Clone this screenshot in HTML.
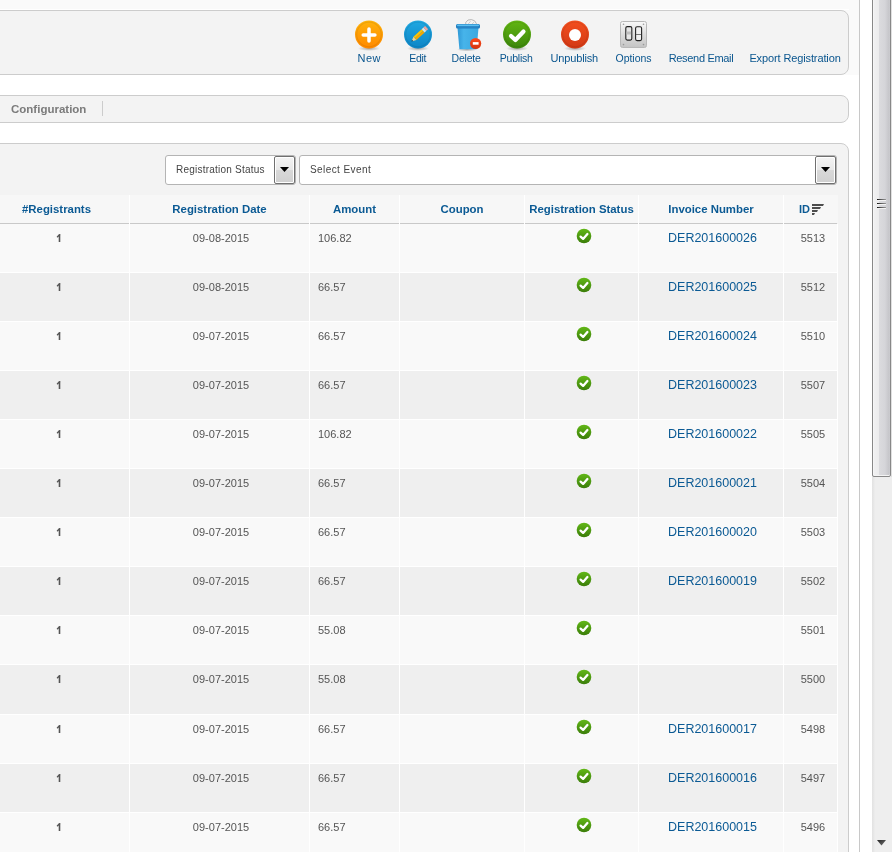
<!DOCTYPE html>
<html><head><meta charset="utf-8">
<style>
*{box-sizing:border-box;margin:0;padding:0}
html,body{width:892px;height:852px;overflow:hidden;background:#fff;font-family:"Liberation Sans",sans-serif}
.gs{position:absolute;left:0;top:0;width:892px;height:852px;will-change:transform}
.a{position:absolute}
.topband{left:0;top:0;width:859px;height:75px;background:#fafafa}
.vline{left:859px;top:0;width:1px;height:852px;background:#c8c8c8}
.box{background:#f3f3f3;border:1px solid #cccccc;border-radius:8px}
.tb{color:#09558e;font-size:11px;line-height:12px;white-space:nowrap}
.hd{color:#0b5a94;font-size:11.4px;font-weight:bold;line-height:13px;white-space:nowrap;text-align:center}
.row{left:-20px;width:857px;height:48px}
.cell{position:absolute;top:0;height:48px}
.tx{position:absolute;white-space:nowrap;font-size:11px;line-height:12px;color:#555}
.inv{position:absolute;white-space:nowrap;font-size:12.5px;line-height:14px;color:#0b5a94}
</style></head><body><div class="gs">
<div class="a topband"></div>
<div class="a vline"></div>

<!-- toolbar -->
<div class="a box" style="left:-20px;top:10px;width:869px;height:65px"></div>
<div class="a" style="left:-20px;top:9px;width:869px;height:1px;background:#fff"></div>

<svg class="a" style="left:353px;top:18px" width="32" height="34" viewBox="0 0 32 34">
<defs><linearGradient id="gn" x1="0" y1="0" x2="0" y2="1"><stop offset="0" stop-color="#ffb30a"/><stop offset="1" stop-color="#ff8800"/></linearGradient>
<radialGradient id="sh" cx="0.5" cy="0.5" r="0.5"><stop offset="0" stop-color="#000" stop-opacity="0.32"/><stop offset="1" stop-color="#000" stop-opacity="0"/></radialGradient></defs>
<ellipse cx="16" cy="30.5" rx="11" ry="2.5" fill="url(#sh)"/>
<circle cx="16" cy="16.5" r="14" fill="url(#gn)"/><circle cx="16" cy="16.5" r="12.3" fill="none" stroke="#000" stroke-opacity="0.07" stroke-width="1.2"/>
<path d="M16 11v12 M10.2 17h11.7" stroke="#fff" stroke-width="3.5" stroke-linecap="round"/></svg>
<svg class="a" style="left:402px;top:18px" width="32" height="34" viewBox="0 0 32 34">
<defs><linearGradient id="ge" x1="0" y1="0" x2="0" y2="1"><stop offset="0" stop-color="#1fa8e2"/><stop offset="1" stop-color="#0d85c6"/></linearGradient></defs>
<ellipse cx="16" cy="30.5" rx="11" ry="2.5" fill="url(#sh)"/>
<circle cx="16" cy="16.5" r="14" fill="url(#ge)"/><circle cx="16" cy="16.5" r="12.3" fill="none" stroke="#000" stroke-opacity="0.07" stroke-width="1.2"/>
<path d="M11.05 23.03 L14.42 21.97 L11.44 18.73 L10.10 22.00Z" fill="#e9d39a"/>
<path d="M9.40 23.60 L11.05 23.03 L10.10 22.00Z" fill="#3a3a3a"/>
<path d="M12.93 20.35 L21.17 12.76 L19.68 11.14 L11.44 18.73Z" fill="#ffc400"/>
<path d="M14.42 21.97 L22.66 14.38 L21.17 12.76 L12.93 20.35Z" fill="#f5a800"/>
<path d="M22.66 14.38 L24.35 12.82 L21.37 9.58 L19.68 11.14Z" fill="#d4e6ea"/>
<path d="M24.35 12.82 L26.09 11.22 L23.11 7.98 L21.37 9.58Z" fill="#f2a29a"/>
</svg>
<svg class="a" style="left:451px;top:16px" width="34" height="36" viewBox="0 0 34 36">
<defs><linearGradient id="gt" x1="0" y1="0" x2="1" y2="0"><stop offset="0" stop-color="#2f98d6"/><stop offset="0.3" stop-color="#47b4ea"/><stop offset="1" stop-color="#3aa8e0"/></linearGradient>
<linearGradient id="gr" x1="0" y1="0" x2="0" y2="1"><stop offset="0" stop-color="#ff4a1a"/><stop offset="1" stop-color="#d2340e"/></linearGradient></defs>
<ellipse cx="16" cy="33.5" rx="10" ry="2" fill="url(#sh)"/>
<path d="M14.6 9.8 L14.8 6.4 L17 4 L20.5 3.6 L23.6 4.8 L25.4 7.6 L25.4 9.8 Z" fill="#f2f2f2" stroke="#9c9c9c" stroke-width="0.7"/><path d="M16.8 8.6 L19.6 5.2 M19.8 9.2 L23 6.2" stroke="#b5b5b5" stroke-width="0.6" fill="none"/>
<path d="M6.4 11 L8.4 33.2 L25.6 33.2 L27.6 11 Z" fill="url(#gt)"/>
<rect x="5" y="8" width="24" height="4.5" rx="1.5" fill="#1f7fc2"/>
<rect x="6" y="8.6" width="22" height="1.6" rx="0.8" fill="#5cbff0"/>
<rect x="7" y="10.6" width="20" height="1.2" fill="#2a86c6"/>
<circle cx="24.6" cy="27.5" r="5.6" fill="url(#gr)"/>
<rect x="21.8" y="26.1" width="5.8" height="2.6" fill="#fff"/>
</svg>
<svg class="a" style="left:501px;top:18px" width="32" height="34" viewBox="0 0 32 34">
<defs><linearGradient id="gp" x1="0" y1="0" x2="0" y2="1"><stop offset="0" stop-color="#62b612"/><stop offset="1" stop-color="#3c860c"/></linearGradient></defs>
<ellipse cx="16" cy="30.5" rx="11" ry="2.5" fill="url(#sh)"/>
<circle cx="16" cy="16.5" r="14" fill="url(#gp)"/><circle cx="16" cy="16.5" r="12.3" fill="none" stroke="#000" stroke-opacity="0.07" stroke-width="1.2"/>
<path d="M10 18 L14.4 22 L22.5 13.5" fill="none" stroke="#fff" stroke-width="4.2" stroke-linecap="round" stroke-linejoin="round"/></svg>
<svg class="a" style="left:559px;top:18px" width="32" height="34" viewBox="0 0 32 34">
<defs><linearGradient id="gu" x1="0" y1="0" x2="0" y2="1"><stop offset="0" stop-color="#f44f1e"/><stop offset="1" stop-color="#d23814"/></linearGradient></defs>
<ellipse cx="16" cy="30.5" rx="11" ry="2.5" fill="url(#sh)"/>
<circle cx="16" cy="16.5" r="14" fill="url(#gu)"/><circle cx="16" cy="16.5" r="12.3" fill="none" stroke="#000" stroke-opacity="0.07" stroke-width="1.2"/>
<circle cx="16" cy="17" r="6" fill="#fff"/></svg>
<svg class="a" style="left:618px;top:19px" width="31" height="31" viewBox="0 0 31 31">
<defs><linearGradient id="go" x1="0" y1="0" x2="0" y2="1"><stop offset="0" stop-color="#fafafa"/><stop offset="0.5" stop-color="#dcdcdc"/><stop offset="1" stop-color="#c4c4c4"/></linearGradient></defs>
<rect x="2.5" y="2.5" width="26" height="26" rx="2" fill="url(#go)" stroke="#b8b8b8" stroke-width="1"/>
<rect x="7.8" y="7.6" width="6" height="13.5" rx="1.5" fill="#e6e6e6" stroke="#222" stroke-width="1.1"/>
<rect x="8.5" y="12.5" width="4.6" height="3" fill="#bdbdbd"/>
<rect x="17.6" y="7.8" width="6" height="13.8" rx="1.5" fill="#f0f0f0" stroke="#222" stroke-width="1.1"/>
<path d="M18 15.5h5.2" stroke="#555" stroke-width="0.8"/>
<circle cx="5.5" cy="5.3" r="0.8" fill="#999"/><circle cx="25.5" cy="5.3" r="0.8" fill="#999"/>
<circle cx="5.5" cy="25.6" r="0.8" fill="#999"/><circle cx="25.5" cy="25.6" r="0.8" fill="#999"/>
</svg>
<div class="a tb" style="left:357.5px;top:52px;letter-spacing:0.5px;font-size:11px">New</div>
<div class="a tb" style="left:409.3px;top:52px;letter-spacing:-0.3px;font-size:10.5px">Edit</div>
<div class="a tb" style="left:451.5px;top:52px;letter-spacing:-0.2px;font-size:10.5px">Delete</div>
<div class="a tb" style="left:499.7px;top:52px;letter-spacing:-0.2px;font-size:10.5px">Publish</div>
<div class="a tb" style="left:550.5px;top:52px;letter-spacing:-0.15px;font-size:11px">Unpublish</div>
<div class="a tb" style="left:615.6px;top:52px;letter-spacing:-0.05px;font-size:10.5px">Options</div>
<div class="a tb" style="left:668.7px;top:52px;letter-spacing:-0.32px;font-size:11px">Resend Email</div>
<div class="a tb" style="left:749.4px;top:52px;letter-spacing:-0.12px;font-size:11px">Export Registration</div>

<!-- submenu bar -->
<div class="a box" style="left:-20px;top:95px;width:869px;height:28px"></div>
<div class="a" style="left:11px;top:103px;font-size:11.5px;font-weight:bold;color:#7b7b7b;line-height:13px">Configuration</div>
<div class="a" style="left:102px;top:101px;width:1px;height:15px;background:#ccc"></div>

<!-- main panel -->
<div class="a box" style="left:-20px;top:143px;width:869px;height:740px"></div>

<div class="a" style="left:165px;top:155px;width:131px;height:30px;background:#fff;border:1px solid #b4b4b4;border-radius:3px"></div>
<div class="a" style="left:176px;top:164px;font-size:10px;letter-spacing:0.22px;line-height:12px;color:#444;white-space:nowrap">Registration Status</div>
<div class="a" style="left:274px;top:156px;width:21px;height:28px;border:1px solid #707070;border-radius:2px;background:linear-gradient(#f4f4f4,#e8e8e8 48%,#d8d8d8 52%,#d0d0d0);box-shadow:inset 0 0 0 1px #fff"></div>
<svg class="a" style="left:280px;top:167px" width="9" height="5" viewBox="0 0 9 5"><path d="M0 0h9L4.5 5z" fill="#000"/></svg>
<div class="a" style="left:299px;top:155px;width:538px;height:30px;background:#fff;border:1px solid #b4b4b4;border-radius:3px"></div>
<div class="a" style="left:310px;top:164px;font-size:10px;letter-spacing:0.42px;line-height:12px;color:#444;white-space:nowrap">Select Event</div>
<div class="a" style="left:815px;top:156px;width:21px;height:28px;border:1px solid #707070;border-radius:2px;background:linear-gradient(#f4f4f4,#e8e8e8 48%,#d8d8d8 52%,#d0d0d0);box-shadow:inset 0 0 0 1px #fff"></div>
<svg class="a" style="left:821px;top:167px" width="9" height="5" viewBox="0 0 9 5"><path d="M0 0h9L4.5 5z" fill="#000"/></svg>
<div class="a" style="left:-20px;top:195px;width:858px;height:28px;background:#f7f7f7"></div>
<div class="a" style="left:-20px;top:223px;width:857px;height:1px;background:#c9c9c9"></div>
<div class="a" style="left:129px;top:195px;width:1px;height:29px;background:#fff"></div>
<div class="a" style="left:309px;top:195px;width:1px;height:29px;background:#fff"></div>
<div class="a" style="left:399px;top:195px;width:1px;height:29px;background:#fff"></div>
<div class="a" style="left:524px;top:195px;width:1px;height:29px;background:#fff"></div>
<div class="a" style="left:638px;top:195px;width:1px;height:29px;background:#fff"></div>
<div class="a" style="left:783px;top:195px;width:1px;height:29px;background:#fff"></div>
<div class="a hd" style="left:-16px;width:145px;top:203px">#Registrants</div>
<div class="a hd" style="left:130px;width:179px;top:203px">Registration Date</div>
<div class="a hd" style="left:310px;width:89px;top:203px">Amount</div>
<div class="a hd" style="left:400px;width:124px;top:203px">Coupon</div>
<div class="a hd" style="left:525px;width:113px;top:203px">Registration Status</div>
<div class="a hd" style="left:639px;width:144px;top:203px">Invoice Number</div>
<div class="a hd" style="left:799px;top:203px;font-size:11px">ID</div>
<svg class="a" style="left:812px;top:204px" width="13" height="12" viewBox="0 0 13 12"><path d="M0 0h12l-1 2H0z M0 3h9l-1 2H0z M0 6h6l-1 2H0z M0 9h3l-1 2H0z" fill="#4d4d4d"/></svg>
<div class="a" style="left:-20px;top:224px;width:857px;height:48px;background:#f9f9f9"></div>
<div class="a" style="left:-20px;top:272px;width:857px;height:1px;background:#fff"></div>
<div class="a" style="left:129px;top:224px;width:1px;height:48px;background:#fff"></div>
<div class="a" style="left:309px;top:224px;width:1px;height:48px;background:#fff"></div>
<div class="a" style="left:399px;top:224px;width:1px;height:48px;background:#fff"></div>
<div class="a" style="left:524px;top:224px;width:1px;height:48px;background:#fff"></div>
<div class="a" style="left:638px;top:224px;width:1px;height:48px;background:#fff"></div>
<div class="a" style="left:783px;top:224px;width:1px;height:48px;background:#fff"></div>
<svg class="a" style="left:55px;top:233px" width="8" height="10" viewBox="0 0 8 10"><path d="M4.5 1.4V9" stroke="#555" stroke-width="1.6"/><path d="M4.6 1.7 L2.5 3.7" stroke="#555" stroke-width="1.5" stroke-linecap="round"/></svg>
<div class="tx" style="left:130px;width:182px;text-align:center;top:232px">09-08-2015</div>
<div class="tx" style="left:318px;top:232px">106.82</div>
<div class="a" style="left:576px;top:228px"><svg width="16" height="16" viewBox="0 0 16 16"><defs><linearGradient id="gc" x1="0" y1="0" x2="0" y2="1"><stop offset="0" stop-color="#62b817"/><stop offset="1" stop-color="#3b7d0a"/></linearGradient></defs><circle cx="8" cy="8" r="7.3" fill="url(#gc)"/><path d="M4.6 8.6 L7.1 10.9 L11.4 6" fill="none" stroke="#fff" stroke-width="2.3" stroke-linecap="round" stroke-linejoin="round"/></svg></div>
<div class="inv" style="left:640px;width:145px;text-align:center;top:231px">DER201600026</div>
<div class="tx" style="left:785px;width:56px;text-align:center;top:232px">5513</div>
<div class="a" style="left:-20px;top:273px;width:857px;height:48px;background:#efefef"></div>
<div class="a" style="left:-20px;top:321px;width:857px;height:1px;background:#fff"></div>
<div class="a" style="left:129px;top:273px;width:1px;height:48px;background:#fff"></div>
<div class="a" style="left:309px;top:273px;width:1px;height:48px;background:#fff"></div>
<div class="a" style="left:399px;top:273px;width:1px;height:48px;background:#fff"></div>
<div class="a" style="left:524px;top:273px;width:1px;height:48px;background:#fff"></div>
<div class="a" style="left:638px;top:273px;width:1px;height:48px;background:#fff"></div>
<div class="a" style="left:783px;top:273px;width:1px;height:48px;background:#fff"></div>
<svg class="a" style="left:55px;top:282px" width="8" height="10" viewBox="0 0 8 10"><path d="M4.5 1.4V9" stroke="#555" stroke-width="1.6"/><path d="M4.6 1.7 L2.5 3.7" stroke="#555" stroke-width="1.5" stroke-linecap="round"/></svg>
<div class="tx" style="left:130px;width:182px;text-align:center;top:281px">09-08-2015</div>
<div class="tx" style="left:318px;top:281px">66.57</div>
<div class="a" style="left:576px;top:277px"><svg width="16" height="16" viewBox="0 0 16 16"><defs><linearGradient id="gc" x1="0" y1="0" x2="0" y2="1"><stop offset="0" stop-color="#62b817"/><stop offset="1" stop-color="#3b7d0a"/></linearGradient></defs><circle cx="8" cy="8" r="7.3" fill="url(#gc)"/><path d="M4.6 8.6 L7.1 10.9 L11.4 6" fill="none" stroke="#fff" stroke-width="2.3" stroke-linecap="round" stroke-linejoin="round"/></svg></div>
<div class="inv" style="left:640px;width:145px;text-align:center;top:280px">DER201600025</div>
<div class="tx" style="left:785px;width:56px;text-align:center;top:281px">5512</div>
<div class="a" style="left:-20px;top:322px;width:857px;height:48px;background:#f9f9f9"></div>
<div class="a" style="left:-20px;top:370px;width:857px;height:1px;background:#fff"></div>
<div class="a" style="left:129px;top:322px;width:1px;height:48px;background:#fff"></div>
<div class="a" style="left:309px;top:322px;width:1px;height:48px;background:#fff"></div>
<div class="a" style="left:399px;top:322px;width:1px;height:48px;background:#fff"></div>
<div class="a" style="left:524px;top:322px;width:1px;height:48px;background:#fff"></div>
<div class="a" style="left:638px;top:322px;width:1px;height:48px;background:#fff"></div>
<div class="a" style="left:783px;top:322px;width:1px;height:48px;background:#fff"></div>
<svg class="a" style="left:55px;top:331px" width="8" height="10" viewBox="0 0 8 10"><path d="M4.5 1.4V9" stroke="#555" stroke-width="1.6"/><path d="M4.6 1.7 L2.5 3.7" stroke="#555" stroke-width="1.5" stroke-linecap="round"/></svg>
<div class="tx" style="left:130px;width:182px;text-align:center;top:330px">09-07-2015</div>
<div class="tx" style="left:318px;top:330px">66.57</div>
<div class="a" style="left:576px;top:326px"><svg width="16" height="16" viewBox="0 0 16 16"><defs><linearGradient id="gc" x1="0" y1="0" x2="0" y2="1"><stop offset="0" stop-color="#62b817"/><stop offset="1" stop-color="#3b7d0a"/></linearGradient></defs><circle cx="8" cy="8" r="7.3" fill="url(#gc)"/><path d="M4.6 8.6 L7.1 10.9 L11.4 6" fill="none" stroke="#fff" stroke-width="2.3" stroke-linecap="round" stroke-linejoin="round"/></svg></div>
<div class="inv" style="left:640px;width:145px;text-align:center;top:329px">DER201600024</div>
<div class="tx" style="left:785px;width:56px;text-align:center;top:330px">5510</div>
<div class="a" style="left:-20px;top:371px;width:857px;height:48px;background:#efefef"></div>
<div class="a" style="left:-20px;top:419px;width:857px;height:1px;background:#fff"></div>
<div class="a" style="left:129px;top:371px;width:1px;height:48px;background:#fff"></div>
<div class="a" style="left:309px;top:371px;width:1px;height:48px;background:#fff"></div>
<div class="a" style="left:399px;top:371px;width:1px;height:48px;background:#fff"></div>
<div class="a" style="left:524px;top:371px;width:1px;height:48px;background:#fff"></div>
<div class="a" style="left:638px;top:371px;width:1px;height:48px;background:#fff"></div>
<div class="a" style="left:783px;top:371px;width:1px;height:48px;background:#fff"></div>
<svg class="a" style="left:55px;top:380px" width="8" height="10" viewBox="0 0 8 10"><path d="M4.5 1.4V9" stroke="#555" stroke-width="1.6"/><path d="M4.6 1.7 L2.5 3.7" stroke="#555" stroke-width="1.5" stroke-linecap="round"/></svg>
<div class="tx" style="left:130px;width:182px;text-align:center;top:379px">09-07-2015</div>
<div class="tx" style="left:318px;top:379px">66.57</div>
<div class="a" style="left:576px;top:375px"><svg width="16" height="16" viewBox="0 0 16 16"><defs><linearGradient id="gc" x1="0" y1="0" x2="0" y2="1"><stop offset="0" stop-color="#62b817"/><stop offset="1" stop-color="#3b7d0a"/></linearGradient></defs><circle cx="8" cy="8" r="7.3" fill="url(#gc)"/><path d="M4.6 8.6 L7.1 10.9 L11.4 6" fill="none" stroke="#fff" stroke-width="2.3" stroke-linecap="round" stroke-linejoin="round"/></svg></div>
<div class="inv" style="left:640px;width:145px;text-align:center;top:378px">DER201600023</div>
<div class="tx" style="left:785px;width:56px;text-align:center;top:379px">5507</div>
<div class="a" style="left:-20px;top:420px;width:857px;height:48px;background:#f9f9f9"></div>
<div class="a" style="left:-20px;top:468px;width:857px;height:1px;background:#fff"></div>
<div class="a" style="left:129px;top:420px;width:1px;height:48px;background:#fff"></div>
<div class="a" style="left:309px;top:420px;width:1px;height:48px;background:#fff"></div>
<div class="a" style="left:399px;top:420px;width:1px;height:48px;background:#fff"></div>
<div class="a" style="left:524px;top:420px;width:1px;height:48px;background:#fff"></div>
<div class="a" style="left:638px;top:420px;width:1px;height:48px;background:#fff"></div>
<div class="a" style="left:783px;top:420px;width:1px;height:48px;background:#fff"></div>
<svg class="a" style="left:55px;top:429px" width="8" height="10" viewBox="0 0 8 10"><path d="M4.5 1.4V9" stroke="#555" stroke-width="1.6"/><path d="M4.6 1.7 L2.5 3.7" stroke="#555" stroke-width="1.5" stroke-linecap="round"/></svg>
<div class="tx" style="left:130px;width:182px;text-align:center;top:428px">09-07-2015</div>
<div class="tx" style="left:318px;top:428px">106.82</div>
<div class="a" style="left:576px;top:424px"><svg width="16" height="16" viewBox="0 0 16 16"><defs><linearGradient id="gc" x1="0" y1="0" x2="0" y2="1"><stop offset="0" stop-color="#62b817"/><stop offset="1" stop-color="#3b7d0a"/></linearGradient></defs><circle cx="8" cy="8" r="7.3" fill="url(#gc)"/><path d="M4.6 8.6 L7.1 10.9 L11.4 6" fill="none" stroke="#fff" stroke-width="2.3" stroke-linecap="round" stroke-linejoin="round"/></svg></div>
<div class="inv" style="left:640px;width:145px;text-align:center;top:427px">DER201600022</div>
<div class="tx" style="left:785px;width:56px;text-align:center;top:428px">5505</div>
<div class="a" style="left:-20px;top:469px;width:857px;height:48px;background:#efefef"></div>
<div class="a" style="left:-20px;top:517px;width:857px;height:1px;background:#fff"></div>
<div class="a" style="left:129px;top:469px;width:1px;height:48px;background:#fff"></div>
<div class="a" style="left:309px;top:469px;width:1px;height:48px;background:#fff"></div>
<div class="a" style="left:399px;top:469px;width:1px;height:48px;background:#fff"></div>
<div class="a" style="left:524px;top:469px;width:1px;height:48px;background:#fff"></div>
<div class="a" style="left:638px;top:469px;width:1px;height:48px;background:#fff"></div>
<div class="a" style="left:783px;top:469px;width:1px;height:48px;background:#fff"></div>
<svg class="a" style="left:55px;top:478px" width="8" height="10" viewBox="0 0 8 10"><path d="M4.5 1.4V9" stroke="#555" stroke-width="1.6"/><path d="M4.6 1.7 L2.5 3.7" stroke="#555" stroke-width="1.5" stroke-linecap="round"/></svg>
<div class="tx" style="left:130px;width:182px;text-align:center;top:477px">09-07-2015</div>
<div class="tx" style="left:318px;top:477px">66.57</div>
<div class="a" style="left:576px;top:473px"><svg width="16" height="16" viewBox="0 0 16 16"><defs><linearGradient id="gc" x1="0" y1="0" x2="0" y2="1"><stop offset="0" stop-color="#62b817"/><stop offset="1" stop-color="#3b7d0a"/></linearGradient></defs><circle cx="8" cy="8" r="7.3" fill="url(#gc)"/><path d="M4.6 8.6 L7.1 10.9 L11.4 6" fill="none" stroke="#fff" stroke-width="2.3" stroke-linecap="round" stroke-linejoin="round"/></svg></div>
<div class="inv" style="left:640px;width:145px;text-align:center;top:476px">DER201600021</div>
<div class="tx" style="left:785px;width:56px;text-align:center;top:477px">5504</div>
<div class="a" style="left:-20px;top:518px;width:857px;height:48px;background:#f9f9f9"></div>
<div class="a" style="left:-20px;top:566px;width:857px;height:1px;background:#fff"></div>
<div class="a" style="left:129px;top:518px;width:1px;height:48px;background:#fff"></div>
<div class="a" style="left:309px;top:518px;width:1px;height:48px;background:#fff"></div>
<div class="a" style="left:399px;top:518px;width:1px;height:48px;background:#fff"></div>
<div class="a" style="left:524px;top:518px;width:1px;height:48px;background:#fff"></div>
<div class="a" style="left:638px;top:518px;width:1px;height:48px;background:#fff"></div>
<div class="a" style="left:783px;top:518px;width:1px;height:48px;background:#fff"></div>
<svg class="a" style="left:55px;top:527px" width="8" height="10" viewBox="0 0 8 10"><path d="M4.5 1.4V9" stroke="#555" stroke-width="1.6"/><path d="M4.6 1.7 L2.5 3.7" stroke="#555" stroke-width="1.5" stroke-linecap="round"/></svg>
<div class="tx" style="left:130px;width:182px;text-align:center;top:526px">09-07-2015</div>
<div class="tx" style="left:318px;top:526px">66.57</div>
<div class="a" style="left:576px;top:522px"><svg width="16" height="16" viewBox="0 0 16 16"><defs><linearGradient id="gc" x1="0" y1="0" x2="0" y2="1"><stop offset="0" stop-color="#62b817"/><stop offset="1" stop-color="#3b7d0a"/></linearGradient></defs><circle cx="8" cy="8" r="7.3" fill="url(#gc)"/><path d="M4.6 8.6 L7.1 10.9 L11.4 6" fill="none" stroke="#fff" stroke-width="2.3" stroke-linecap="round" stroke-linejoin="round"/></svg></div>
<div class="inv" style="left:640px;width:145px;text-align:center;top:525px">DER201600020</div>
<div class="tx" style="left:785px;width:56px;text-align:center;top:526px">5503</div>
<div class="a" style="left:-20px;top:567px;width:857px;height:48px;background:#efefef"></div>
<div class="a" style="left:-20px;top:615px;width:857px;height:1px;background:#fff"></div>
<div class="a" style="left:129px;top:567px;width:1px;height:48px;background:#fff"></div>
<div class="a" style="left:309px;top:567px;width:1px;height:48px;background:#fff"></div>
<div class="a" style="left:399px;top:567px;width:1px;height:48px;background:#fff"></div>
<div class="a" style="left:524px;top:567px;width:1px;height:48px;background:#fff"></div>
<div class="a" style="left:638px;top:567px;width:1px;height:48px;background:#fff"></div>
<div class="a" style="left:783px;top:567px;width:1px;height:48px;background:#fff"></div>
<svg class="a" style="left:55px;top:576px" width="8" height="10" viewBox="0 0 8 10"><path d="M4.5 1.4V9" stroke="#555" stroke-width="1.6"/><path d="M4.6 1.7 L2.5 3.7" stroke="#555" stroke-width="1.5" stroke-linecap="round"/></svg>
<div class="tx" style="left:130px;width:182px;text-align:center;top:575px">09-07-2015</div>
<div class="tx" style="left:318px;top:575px">66.57</div>
<div class="a" style="left:576px;top:571px"><svg width="16" height="16" viewBox="0 0 16 16"><defs><linearGradient id="gc" x1="0" y1="0" x2="0" y2="1"><stop offset="0" stop-color="#62b817"/><stop offset="1" stop-color="#3b7d0a"/></linearGradient></defs><circle cx="8" cy="8" r="7.3" fill="url(#gc)"/><path d="M4.6 8.6 L7.1 10.9 L11.4 6" fill="none" stroke="#fff" stroke-width="2.3" stroke-linecap="round" stroke-linejoin="round"/></svg></div>
<div class="inv" style="left:640px;width:145px;text-align:center;top:574px">DER201600019</div>
<div class="tx" style="left:785px;width:56px;text-align:center;top:575px">5502</div>
<div class="a" style="left:-20px;top:616px;width:857px;height:48px;background:#f9f9f9"></div>
<div class="a" style="left:-20px;top:664px;width:857px;height:1px;background:#fff"></div>
<div class="a" style="left:129px;top:616px;width:1px;height:48px;background:#fff"></div>
<div class="a" style="left:309px;top:616px;width:1px;height:48px;background:#fff"></div>
<div class="a" style="left:399px;top:616px;width:1px;height:48px;background:#fff"></div>
<div class="a" style="left:524px;top:616px;width:1px;height:48px;background:#fff"></div>
<div class="a" style="left:638px;top:616px;width:1px;height:48px;background:#fff"></div>
<div class="a" style="left:783px;top:616px;width:1px;height:48px;background:#fff"></div>
<svg class="a" style="left:55px;top:625px" width="8" height="10" viewBox="0 0 8 10"><path d="M4.5 1.4V9" stroke="#555" stroke-width="1.6"/><path d="M4.6 1.7 L2.5 3.7" stroke="#555" stroke-width="1.5" stroke-linecap="round"/></svg>
<div class="tx" style="left:130px;width:182px;text-align:center;top:624px">09-07-2015</div>
<div class="tx" style="left:318px;top:624px">55.08</div>
<div class="a" style="left:576px;top:620px"><svg width="16" height="16" viewBox="0 0 16 16"><defs><linearGradient id="gc" x1="0" y1="0" x2="0" y2="1"><stop offset="0" stop-color="#62b817"/><stop offset="1" stop-color="#3b7d0a"/></linearGradient></defs><circle cx="8" cy="8" r="7.3" fill="url(#gc)"/><path d="M4.6 8.6 L7.1 10.9 L11.4 6" fill="none" stroke="#fff" stroke-width="2.3" stroke-linecap="round" stroke-linejoin="round"/></svg></div>
<div class="tx" style="left:785px;width:56px;text-align:center;top:624px">5501</div>
<div class="a" style="left:-20px;top:665px;width:857px;height:49px;background:#efefef"></div>
<div class="a" style="left:-20px;top:714px;width:857px;height:1px;background:#fff"></div>
<div class="a" style="left:129px;top:665px;width:1px;height:49px;background:#fff"></div>
<div class="a" style="left:309px;top:665px;width:1px;height:49px;background:#fff"></div>
<div class="a" style="left:399px;top:665px;width:1px;height:49px;background:#fff"></div>
<div class="a" style="left:524px;top:665px;width:1px;height:49px;background:#fff"></div>
<div class="a" style="left:638px;top:665px;width:1px;height:49px;background:#fff"></div>
<div class="a" style="left:783px;top:665px;width:1px;height:49px;background:#fff"></div>
<svg class="a" style="left:55px;top:674px" width="8" height="10" viewBox="0 0 8 10"><path d="M4.5 1.4V9" stroke="#555" stroke-width="1.6"/><path d="M4.6 1.7 L2.5 3.7" stroke="#555" stroke-width="1.5" stroke-linecap="round"/></svg>
<div class="tx" style="left:130px;width:182px;text-align:center;top:673px">09-07-2015</div>
<div class="tx" style="left:318px;top:673px">55.08</div>
<div class="a" style="left:576px;top:669px"><svg width="16" height="16" viewBox="0 0 16 16"><defs><linearGradient id="gc" x1="0" y1="0" x2="0" y2="1"><stop offset="0" stop-color="#62b817"/><stop offset="1" stop-color="#3b7d0a"/></linearGradient></defs><circle cx="8" cy="8" r="7.3" fill="url(#gc)"/><path d="M4.6 8.6 L7.1 10.9 L11.4 6" fill="none" stroke="#fff" stroke-width="2.3" stroke-linecap="round" stroke-linejoin="round"/></svg></div>
<div class="tx" style="left:785px;width:56px;text-align:center;top:673px">5500</div>
<div class="a" style="left:-20px;top:715px;width:857px;height:48px;background:#f9f9f9"></div>
<div class="a" style="left:-20px;top:763px;width:857px;height:1px;background:#fff"></div>
<div class="a" style="left:129px;top:715px;width:1px;height:48px;background:#fff"></div>
<div class="a" style="left:309px;top:715px;width:1px;height:48px;background:#fff"></div>
<div class="a" style="left:399px;top:715px;width:1px;height:48px;background:#fff"></div>
<div class="a" style="left:524px;top:715px;width:1px;height:48px;background:#fff"></div>
<div class="a" style="left:638px;top:715px;width:1px;height:48px;background:#fff"></div>
<div class="a" style="left:783px;top:715px;width:1px;height:48px;background:#fff"></div>
<svg class="a" style="left:55px;top:724px" width="8" height="10" viewBox="0 0 8 10"><path d="M4.5 1.4V9" stroke="#555" stroke-width="1.6"/><path d="M4.6 1.7 L2.5 3.7" stroke="#555" stroke-width="1.5" stroke-linecap="round"/></svg>
<div class="tx" style="left:130px;width:182px;text-align:center;top:723px">09-07-2015</div>
<div class="tx" style="left:318px;top:723px">66.57</div>
<div class="a" style="left:576px;top:719px"><svg width="16" height="16" viewBox="0 0 16 16"><defs><linearGradient id="gc" x1="0" y1="0" x2="0" y2="1"><stop offset="0" stop-color="#62b817"/><stop offset="1" stop-color="#3b7d0a"/></linearGradient></defs><circle cx="8" cy="8" r="7.3" fill="url(#gc)"/><path d="M4.6 8.6 L7.1 10.9 L11.4 6" fill="none" stroke="#fff" stroke-width="2.3" stroke-linecap="round" stroke-linejoin="round"/></svg></div>
<div class="inv" style="left:640px;width:145px;text-align:center;top:722px">DER201600017</div>
<div class="tx" style="left:785px;width:56px;text-align:center;top:723px">5498</div>
<div class="a" style="left:-20px;top:764px;width:857px;height:48px;background:#efefef"></div>
<div class="a" style="left:-20px;top:812px;width:857px;height:1px;background:#fff"></div>
<div class="a" style="left:129px;top:764px;width:1px;height:48px;background:#fff"></div>
<div class="a" style="left:309px;top:764px;width:1px;height:48px;background:#fff"></div>
<div class="a" style="left:399px;top:764px;width:1px;height:48px;background:#fff"></div>
<div class="a" style="left:524px;top:764px;width:1px;height:48px;background:#fff"></div>
<div class="a" style="left:638px;top:764px;width:1px;height:48px;background:#fff"></div>
<div class="a" style="left:783px;top:764px;width:1px;height:48px;background:#fff"></div>
<svg class="a" style="left:55px;top:773px" width="8" height="10" viewBox="0 0 8 10"><path d="M4.5 1.4V9" stroke="#555" stroke-width="1.6"/><path d="M4.6 1.7 L2.5 3.7" stroke="#555" stroke-width="1.5" stroke-linecap="round"/></svg>
<div class="tx" style="left:130px;width:182px;text-align:center;top:772px">09-07-2015</div>
<div class="tx" style="left:318px;top:772px">66.57</div>
<div class="a" style="left:576px;top:768px"><svg width="16" height="16" viewBox="0 0 16 16"><defs><linearGradient id="gc" x1="0" y1="0" x2="0" y2="1"><stop offset="0" stop-color="#62b817"/><stop offset="1" stop-color="#3b7d0a"/></linearGradient></defs><circle cx="8" cy="8" r="7.3" fill="url(#gc)"/><path d="M4.6 8.6 L7.1 10.9 L11.4 6" fill="none" stroke="#fff" stroke-width="2.3" stroke-linecap="round" stroke-linejoin="round"/></svg></div>
<div class="inv" style="left:640px;width:145px;text-align:center;top:771px">DER201600016</div>
<div class="tx" style="left:785px;width:56px;text-align:center;top:772px">5497</div>
<div class="a" style="left:-20px;top:813px;width:857px;height:48px;background:#f9f9f9"></div>
<div class="a" style="left:-20px;top:861px;width:857px;height:1px;background:#fff"></div>
<div class="a" style="left:129px;top:813px;width:1px;height:48px;background:#fff"></div>
<div class="a" style="left:309px;top:813px;width:1px;height:48px;background:#fff"></div>
<div class="a" style="left:399px;top:813px;width:1px;height:48px;background:#fff"></div>
<div class="a" style="left:524px;top:813px;width:1px;height:48px;background:#fff"></div>
<div class="a" style="left:638px;top:813px;width:1px;height:48px;background:#fff"></div>
<div class="a" style="left:783px;top:813px;width:1px;height:48px;background:#fff"></div>
<svg class="a" style="left:55px;top:822px" width="8" height="10" viewBox="0 0 8 10"><path d="M4.5 1.4V9" stroke="#555" stroke-width="1.6"/><path d="M4.6 1.7 L2.5 3.7" stroke="#555" stroke-width="1.5" stroke-linecap="round"/></svg>
<div class="tx" style="left:130px;width:182px;text-align:center;top:821px">09-07-2015</div>
<div class="tx" style="left:318px;top:821px">66.57</div>
<div class="a" style="left:576px;top:817px"><svg width="16" height="16" viewBox="0 0 16 16"><defs><linearGradient id="gc" x1="0" y1="0" x2="0" y2="1"><stop offset="0" stop-color="#62b817"/><stop offset="1" stop-color="#3b7d0a"/></linearGradient></defs><circle cx="8" cy="8" r="7.3" fill="url(#gc)"/><path d="M4.6 8.6 L7.1 10.9 L11.4 6" fill="none" stroke="#fff" stroke-width="2.3" stroke-linecap="round" stroke-linejoin="round"/></svg></div>
<div class="inv" style="left:640px;width:145px;text-align:center;top:820px">DER201600015</div>
<div class="tx" style="left:785px;width:56px;text-align:center;top:821px">5496</div>
<div class="a" style="left:837px;top:224px;width:1px;height:628px;background:#fff"></div>

<div class="a" style="left:872px;top:0;width:20px;height:852px;background:linear-gradient(90deg,#e2e2e2 0,#e8e8e8 10%,#eeeeee 15%,#eeeeee 100%)"></div>
<div class="a" style="left:872px;top:-4px;width:19px;height:481px;border:1px solid #888;border-radius:0 0 2px 2px;box-shadow:inset 0 -1px 0 #f4f4f4;background:linear-gradient(90deg,#fafafa 0,#f0f0f1 7%,#ececed 33%,#dbdbde 36%,#d5d5d9 70%,#c7c7cb 92%,#cbcbcf 100%)"></div>
<div class="a" style="left:891px;top:0;width:1px;height:477px;background:#e0e0e0"></div>
<div class="a" style="left:877px;top:199px;width:9px;height:1px;background:linear-gradient(90deg,#111,#555 40%,#999);box-shadow:0 1px 0 #f4f4f4"></div>
<div class="a" style="left:877px;top:203px;width:9px;height:1px;background:linear-gradient(90deg,#111,#555 40%,#999);box-shadow:0 1px 0 #f4f4f4"></div>
<div class="a" style="left:877px;top:207px;width:9px;height:1px;background:linear-gradient(90deg,#111,#555 40%,#999);box-shadow:0 1px 0 #f4f4f4"></div>
<svg class="a" style="left:877px;top:840px" width="9" height="6" viewBox="0 0 9 6"><defs><linearGradient id="ga" x1="0" y1="0" x2="1" y2="1"><stop offset="0" stop-color="#222"/><stop offset="1" stop-color="#777"/></linearGradient></defs><path d="M0 0h9L4.5 5.5z" fill="url(#ga)"/></svg>
</div></body></html>
